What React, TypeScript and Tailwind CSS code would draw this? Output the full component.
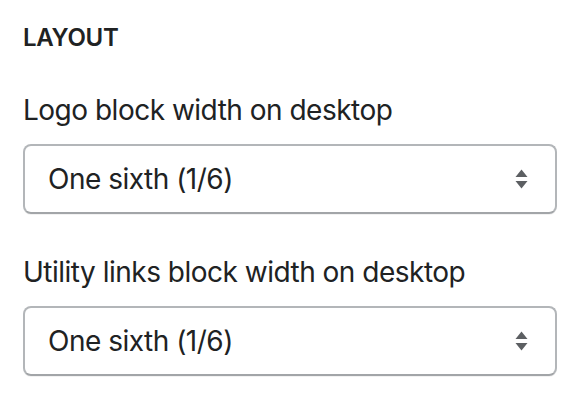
import { ChangeEvent, useState } from 'react';

interface FieldProps {
  label: string;
  value: string;
  onChange: (v: string) => void;
}

const options = ['One sixth (1/6)', 'One fifth (1/5)', 'One quarter (1/4)', 'One third (1/3)', 'One half (1/2)'];

function SelectField({ label, value, onChange }: FieldProps) {
  return (
    <div className="flex flex-col">
      <label className="text-[28px] leading-[40px] text-[#202223] tracking-[-0.5px]">{label}</label>
      <div className="relative mt-[14px]">
        <select
          value={value}
          onChange={(e: ChangeEvent<HTMLSelectElement>) => onChange(e.target.value)}
          className="w-full h-[70px] appearance-none bg-white border-2 border-[#b3b6b9] border-b-[#a2a5a8] rounded-[8px] pl-[23px] pr-[60px] text-[28px] tracking-[-0.5px] text-[#202223] outline-none shadow-[0_1px_0_rgba(0,0,0,0.05)]"
        >
          {options.map((o) => (
            <option key={o} value={o}>
              {o}
            </option>
          ))}
        </select>
        <svg
          className="pointer-events-none absolute right-[29px] top-1/2 -translate-y-1/2 w-[13px] h-[20px]"
          viewBox="0 0 13 20"
          fill="#5c5f62"
        >
          <path d="M6.5 0.5 L12.5 8 H0.5 Z" />
          <path d="M0.5 12 H12.5 L6.5 19.5 Z" />
        </svg>
      </div>
    </div>
  );
}

export default function App() {
  const [logoWidth, setLogoWidth] = useState(options[0]);
  const [utilityWidth, setUtilityWidth] = useState(options[0]);

  return (
    <div className="w-[582px] h-[410px] bg-white px-[23px] pt-[22px] font-['Inter',sans-serif]">
      <h3 className="text-[24px] leading-[32px] font-semibold text-[#202223] uppercase tracking-[-0.3px]">Layout</h3>
      <div className="mt-[36px] flex flex-col gap-[38px] w-[534px]">
        <SelectField label="Logo block width on desktop" value={logoWidth} onChange={setLogoWidth} />
        <SelectField label="Utility links block width on desktop" value={utilityWidth} onChange={setUtilityWidth} />
      </div>
    </div>
  );
}
